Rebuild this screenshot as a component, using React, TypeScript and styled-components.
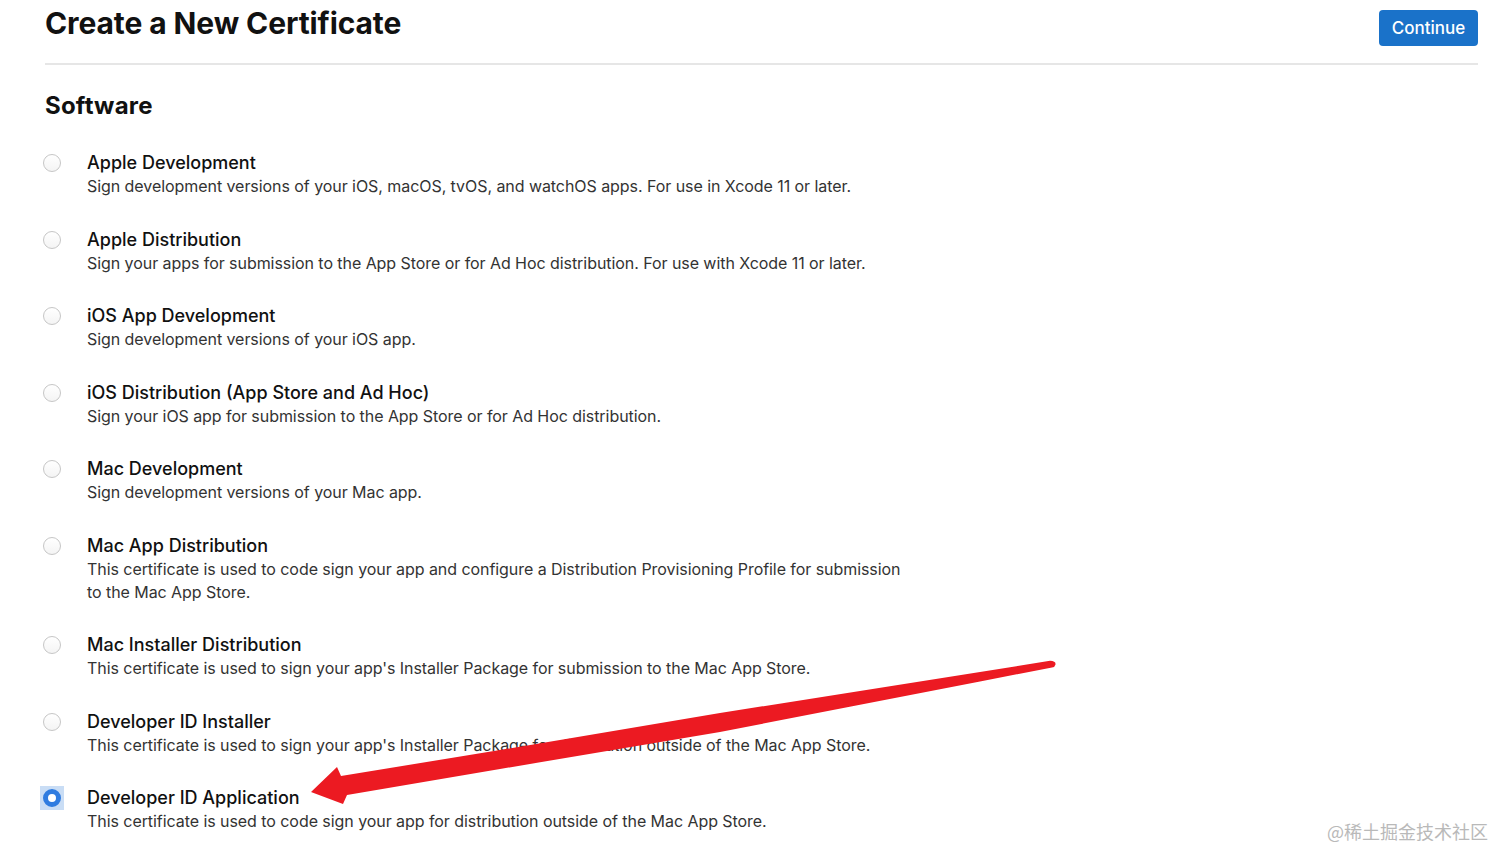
import styled, { createGlobalStyle } from 'styled-components';

const GlobalStyle = createGlobalStyle`
  html, body {
    margin: 0;
    padding: 0;
    background: #fff;
  }
  body {
    font-family: Inter, 'Noto Sans', sans-serif;
    color: #111;
    -webkit-font-smoothing: antialiased;
  }
`;

const Page = styled.div`
  position: relative;
  padding: 0 34px 0 45px;
  height: 866px;
  overflow: hidden;
`;

const Header = styled.header`
  display: flex;
  justify-content: space-between;
  align-items: flex-start;
  height: 63px;
  border-bottom: 2px solid #e6e6e6;
`;

const Title = styled.h1`
  margin: 0;
  font-size: 30px;
  line-height: 46px;
  font-weight: 700;
  letter-spacing: -0.1px;
  color: #111;
`;

const Button = styled.button`
  margin-top: 10px;
  height: 36px;
  width: 99px;
  border: none;
  border-radius: 4px;
  background: #1a72c9;
  color: #fff;
  font-family: Inter, sans-serif;
  font-size: 17px;
  font-weight: 500;
  cursor: pointer;
`;

const Section = styled.h2`
  margin: 26px 0 30px;
  font-size: 24px;
  line-height: 30px;
  font-weight: 700;
  letter-spacing: 0.2px;
  color: #111;
`;

const List = styled.div`
  display: flex;
  flex-direction: column;
  gap: 29.5px;
`;

const Row = styled.label`
  display: grid;
  grid-template-columns: 42px 1fr;
  align-items: start;
`;

const RadioCell = styled.div<{ $checked?: boolean }>`
  display: flex;
  align-items: center;
  justify-content: center;
  width: 24px;
  height: 24px;
  margin-left: -5px;
  background: ${(p) => (p.$checked ? '#c9ddf5' : 'transparent')};
`;

const Radio = styled.span<{ $checked?: boolean }>`
  box-sizing: border-box;
  width: 18px;
  height: 18px;
  border-radius: 50%;
  border: ${(p) => (p.$checked ? '5px solid #2f7ce0' : '1px solid #c6c6c6')};
  background: ${(p) => (p.$checked ? '#fff' : 'linear-gradient(#fff, #f4f4f4)')};
`;

const Name = styled.div`
  font-size: 18px;
  line-height: 24px;
  font-weight: 500;
  color: #111;
`;

const Desc = styled.div`
  max-width: 830px;
  font-size: 16px;
  line-height: 23px;
  letter-spacing: -0.06px;
  color: #333;
`;

const Arrow = styled.svg`
  position: absolute;
  left: 0;
  top: 0;
  pointer-events: none;
`;

const Watermark = styled.div`
  position: absolute;
  right: 24px;
  bottom: 22px;
  font-family: 'Noto Sans CJK SC', sans-serif;
  font-size: 18px;
  color: #b9b9b9;
`;

const certs = [
  {
    name: 'Apple Development',
    desc: 'Sign development versions of your iOS, macOS, tvOS, and watchOS apps. For use in Xcode 11 or later.',
  },
  {
    name: 'Apple Distribution',
    desc: 'Sign your apps for submission to the App Store or for Ad Hoc distribution. For use with Xcode 11 or later.',
  },
  { name: 'iOS App Development', desc: 'Sign development versions of your iOS app.' },
  {
    name: 'iOS Distribution (App Store and Ad Hoc)',
    desc: 'Sign your iOS app for submission to the App Store or for Ad Hoc distribution.',
  },
  { name: 'Mac Development', desc: 'Sign development versions of your Mac app.' },
  {
    name: 'Mac App Distribution',
    desc: 'This certificate is used to code sign your app and configure a Distribution Provisioning Profile for submission to the Mac App Store.',
  },
  {
    name: 'Mac Installer Distribution',
    desc: "This certificate is used to sign your app's Installer Package for submission to the Mac App Store.",
  },
  {
    name: 'Developer ID Installer',
    desc: "This certificate is used to sign your app's Installer Package for distribution outside of the Mac App Store.",
  },
  {
    name: 'Developer ID Application',
    desc: 'This certificate is used to code sign your app for distribution outside of the Mac App Store.',
    checked: true,
  },
];

const App = () => {
  return (
    <>
      <GlobalStyle />
      <Page>
        <Header>
          <Title>Create a New Certificate</Title>
          <Button>Continue</Button>
        </Header>
        <Section>Software</Section>
        <List>
          {certs.map((c) => (
            <Row key={c.name}>
              <RadioCell $checked={c.checked}>
                <Radio $checked={c.checked} />
              </RadioCell>
              <div>
                <Name>{c.name}</Name>
                <Desc>{c.desc}</Desc>
              </div>
            </Row>
          ))}
        </List>
        <Arrow width="1512" height="866" viewBox="0 0 1512 866">
          {/* red annotation arrow pointing at the selected option */}
          <path
            d="M311 792 L337 767 L341 776 L500 750 L720 713 L980 672 L1050 660.8 Q1056 661 1055.5 664.5 Q1055 667 1052 667.5 L980 681.5 L720 732 L500 769 L347 795 L343 804 Z"
            fill="#ec1a22"
          />
        </Arrow>
        <Watermark>@稀土掘金技术社区</Watermark>
      </Page>
    </>
  );
};

export default App;
